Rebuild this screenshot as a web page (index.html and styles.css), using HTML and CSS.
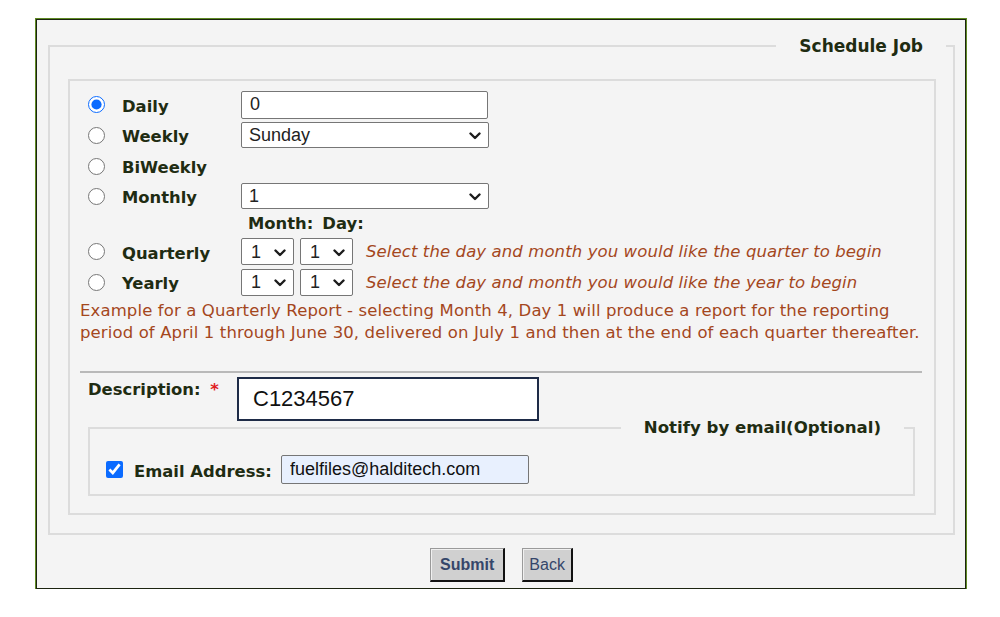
FILE: index.html
```html
<!DOCTYPE html>
<html>
<head>
<meta charset="utf-8">
<link rel="stylesheet" href="styles.css">
</head>
<body>
<div class="outer">
  <fieldset class="sched">
    <legend>Schedule Job</legend>
    <div class="inner">
      <div class="grid">
        <input type="radio" name="freq" class="rad" checked>
        <label class="lbl">Daily</label>
        <input type="text" class="txt" value="0">

        <input type="radio" name="freq" class="rad">
        <label class="lbl">Weekly</label>
        <span class="sel wide"><select><option>Sunday</option></select><svg class="chev" viewBox="0 0 12 8"><path d="M1.5 1.5 L6 6 L10.5 1.5" /></svg></span>

        <input type="radio" name="freq" class="rad">
        <label class="lbl">BiWeekly</label>
        <span></span>

        <input type="radio" name="freq" class="rad">
        <label class="lbl">Monthly</label>
        <span class="sel wide"><select><option>1</option></select><svg class="chev" viewBox="0 0 12 8"><path d="M1.5 1.5 L6 6 L10.5 1.5" /></svg></span>

        <span></span>
        <span></span>
        <div class="mdhead"><span>Month:</span><span>Day:</span></div>

        <input type="radio" name="freq" class="rad">
        <label class="lbl">Quarterly</label>
        <div class="pair">
          <span class="sel small"><select><option>1</option></select><svg class="chev" viewBox="0 0 12 8"><path d="M1.5 1.5 L6 6 L10.5 1.5" /></svg></span>
          <span class="sel small"><select><option>1</option></select><svg class="chev" viewBox="0 0 12 8"><path d="M1.5 1.5 L6 6 L10.5 1.5" /></svg></span>
          <em class="hint">Select the day and month you would like the quarter to begin</em>
        </div>

        <input type="radio" name="freq" class="rad">
        <label class="lbl">Yearly</label>
        <div class="pair">
          <span class="sel small"><select><option>1</option></select><svg class="chev" viewBox="0 0 12 8"><path d="M1.5 1.5 L6 6 L10.5 1.5" /></svg></span>
          <span class="sel small"><select><option>1</option></select><svg class="chev" viewBox="0 0 12 8"><path d="M1.5 1.5 L6 6 L10.5 1.5" /></svg></span>
          <em class="hint">Select the day and month you would like the year to begin</em>
        </div>
      </div>
      <p class="example">Example for a Quarterly Report - selecting Month 4, Day 1 will produce a report for the reporting period of April 1 through June 30, delivered on July 1 and then at the end of each quarter thereafter.</p>
      <div class="rule"></div>
      <div class="desc">
        <label class="lbl">Description: <span class="req">*</span></label>
        <input type="text" class="desc-in" value="C1234567">
      </div>
      <fieldset class="notify">
        <legend>Notify by email(Optional)</legend>
        <div class="mailrow">
          <input type="checkbox" class="chk" checked>
          <label class="lbl">Email Address:</label>
          <input type="text" class="mail" value="fuelfiles@halditech.com">
        </div>
      </fieldset>
    </div>
  </fieldset>
  <div class="buttons">
    <button class="btn bold">Submit</button>
    <button class="btn back">Back</button>
  </div>
</div>
</body>
</html>
```
FILE: styles.css
```css
html, body {
  margin: 0;
  padding: 0;
  background: #ffffff;
}
body {
  font-family: "DejaVu Sans", Verdana, sans-serif;
  color: #1f2c12;
}
.outer {
  box-sizing: border-box;
  width: 930px;
  height: 570px;
  margin: 19px 0 0 36px;
  background: #f4f4f4;
  border: 1px solid #1c2410;
  outline: 1px solid #5f8a24;
  outline-offset: 0;
  padding: 16px 10px 0 11px;
  display: flex;
  flex-direction: column;
}
.sched {
  margin: 0;
  border: 2px solid #dcdcdc;
  padding: 0 7px 18px 18px;
  min-width: 0;
}
.sched > legend {
  margin-left: auto;
  margin-right: 0;
  padding: 0 23px;
  font-weight: bold;
  font-size: 17px;
  line-height: 20px;
  color: #1f2c12;
}
.inner {
  margin: 23px 10px 0 0;
  border: 2px solid #dcdcdc;
  padding: 8px 12px 17px 10px;
}
.grid {
  display: grid;
  grid-template-columns: 42px 119px 1fr;
  grid-template-rows: 31px 30px 32px 28px 26px 31px 30px;
  align-items: center;
  justify-items: start;
}
.rad {
  margin: 0 0 0 8px;
  width: 17px;
  height: 17px;
  accent-color: #0b6bff;
}
.lbl {
  font-weight: bold;
  font-size: 16.4px;
  color: #1f2c12;
  padding-top: 4px;
}
.grid .lbl {
  padding-top: 3px;
}
.txt {
  box-sizing: border-box;
  width: 247px;
  height: 28px;
  border: 1px solid #767676;
  border-radius: 2px;
  padding: 0 8px;
  font-family: "Liberation Sans", Arial, sans-serif;
  font-size: 18px;
  color: #222;
  background: #fff;
}
.sel {
  position: relative;
  display: inline-block;
}
.sel select {
  box-sizing: border-box;
  appearance: none;
  -webkit-appearance: none;
  border: 1px solid #767676;
  border-radius: 2px;
  background: #fff;
  font-family: "Liberation Sans", Arial, sans-serif;
  font-size: 18px;
  color: #222;
  padding: 0 7px;
  display: block;
}
.sel.wide select {
  width: 248px;
  height: 26px;
}
.sel.small select {
  width: 53px;
  height: 27px;
  padding: 0 9px;
}
.chev {
  position: absolute;
  right: 8px;
  top: 50%;
  width: 12px;
  height: 8px;
  margin-top: -3px;
  fill: none;
  stroke: #1c1c1c;
  stroke-width: 2.4;
  stroke-linecap: round;
  stroke-linejoin: round;
  pointer-events: none;
}
.mdhead {
  display: flex;
  gap: 9px;
  padding-left: 7px;
  font-weight: bold;
  font-size: 16.4px;
}
.pair {
  display: flex;
  align-items: center;
  gap: 6px;
}
.hint {
  margin-left: 7px;
  font-style: italic;
  font-size: 16.5px;
  letter-spacing: 0.1px;
  color: #a4471d;
}
.example {
  margin: 3px -8px 0 0;
  font-size: 16.5px;
  letter-spacing: 0.12px;
  line-height: 22px;
  color: #a4471d;
}
.rule {
  margin-top: 27px;
  border-top: 2px solid #b9b9b9;
}
.desc {
  display: flex;
  align-items: flex-start;
  margin: 4px 0 0 8px;
}
.desc .lbl {
  width: 149px;
  padding-top: 3px;
}
.req {
  color: #e0201f;
  margin-left: 4px;
}
.desc-in {
  box-sizing: border-box;
  width: 302px;
  height: 44px;
  border: 2px solid #1e2b47;
  background: #fff;
  padding: 0 14px;
  font-family: "Liberation Sans", Arial, sans-serif;
  font-size: 22px;
  color: #111;
}
.notify {
  margin: -3px 7px 0 8px;
  border: 2px solid #dcdcdc;
  padding: 0 9px 10px 16px;
  min-width: 0;
}
.notify > legend {
  margin-left: auto;
  padding: 0 23px;
  font-weight: bold;
  font-size: 16.6px;
  line-height: 20px;
  color: #1f2c12;
}
.mailrow {
  display: flex;
  align-items: center;
  margin-top: 17px;
}
.chk {
  margin: 0;
  width: 17px;
  height: 17px;
  accent-color: #0b6bff;
}
.mailrow .lbl {
  margin-left: 11px;
  width: 147px;
  padding-top: 3px;
}
.mail {
  box-sizing: border-box;
  width: 248px;
  height: 29px;
  border: 1px solid #767676;
  border-radius: 2px;
  background: #e8f0fe;
  padding: 0 8px;
  font-family: "Liberation Sans", Arial, sans-serif;
  font-size: 18px;
  color: #111;
}
.buttons {
  display: flex;
  justify-content: center;
  gap: 17px;
  margin-top: 13px;
}
.btn {
  height: 34px;
  padding: 0 9px;
  background: #d0d0d0;
  border-style: solid;
  border-width: 1px 2px 2px 1px;
  border-color: #9a9a9a #111 #111 #9a9a9a;
  box-shadow: inset 1px 1px 0 #f0f0f0;
  font-family: "Liberation Sans", Arial, sans-serif;
  font-size: 16px;
  color: #35466a;
}
.btn.back {
  padding: 0 6px;
}
.btn.bold {
  font-weight: bold;
}
```
